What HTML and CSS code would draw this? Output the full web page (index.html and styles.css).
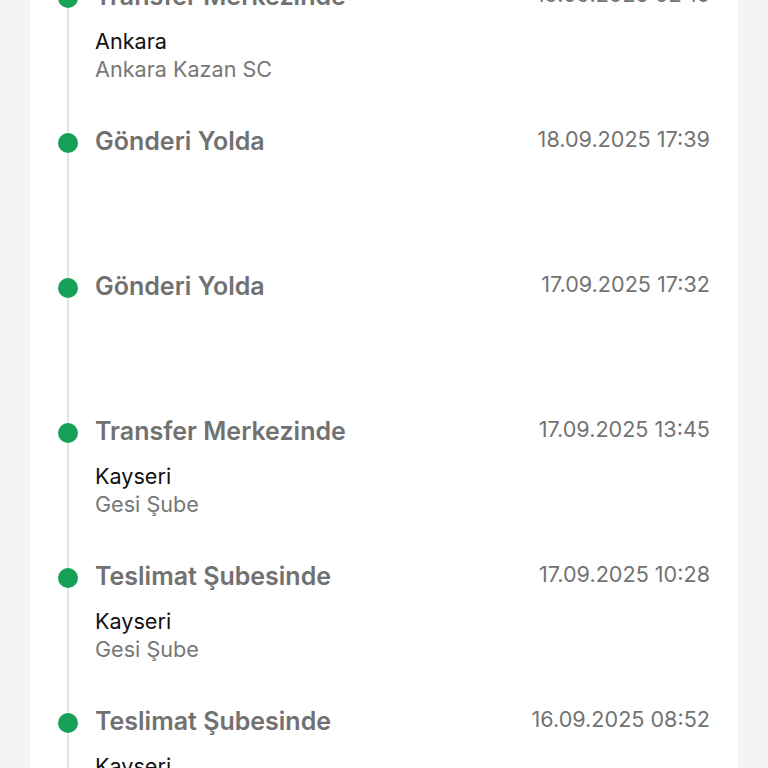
FILE: index.html
```html
<!DOCTYPE html>
<html lang="tr">
<head>
    <meta charset="UTF-8">
    <meta name="viewport" content="width=device-width, initial-scale=1.0">
    <title>Gönderi Takibi</title>
    <link rel="stylesheet" href="styles.css">
</head>
<body>
    <div class="page">
        <div class="card">
            <div class="timeline">
                <div class="step">
                    <span class="dot"></span>
                    <div class="info">
                        <div class="title">Transfer Merkezinde</div>
                        <div class="place">Ankara</div>
                        <div class="branch">Ankara Kazan SC</div>
                    </div>
                    <div class="date">19.09.2025 02:16</div>
                </div>
                <div class="step">
                    <span class="dot"></span>
                    <div class="info">
                        <div class="title">Gönderi Yolda</div>
                    </div>
                    <div class="date">18.09.2025 17:39</div>
                </div>
                <div class="step">
                    <span class="dot"></span>
                    <div class="info">
                        <div class="title">Gönderi Yolda</div>
                    </div>
                    <div class="date">17.09.2025 17:32</div>
                </div>
                <div class="step">
                    <span class="dot"></span>
                    <div class="info">
                        <div class="title">Transfer Merkezinde</div>
                        <div class="place">Kayseri</div>
                        <div class="branch">Gesi Şube</div>
                    </div>
                    <div class="date">17.09.2025 13:45</div>
                </div>
                <div class="step">
                    <span class="dot"></span>
                    <div class="info">
                        <div class="title">Teslimat Şubesinde</div>
                        <div class="place">Kayseri</div>
                        <div class="branch">Gesi Şube</div>
                    </div>
                    <div class="date">17.09.2025 10:28</div>
                </div>
                <div class="step">
                    <span class="dot"></span>
                    <div class="info">
                        <div class="title">Teslimat Şubesinde</div>
                        <div class="place">Kayseri</div>
                        <div class="branch">Gesi Şube</div>
                    </div>
                    <div class="date">16.09.2025 08:52</div>
                </div>
            </div>
        </div>
    </div>
</body>
</html>
```

FILE: styles.css
```css
* { margin: 0; padding: 0; box-sizing: border-box; }
body {
    font-family: Inter, "Noto Sans", sans-serif;
    background: #f3f4f6;
    color: #111;
    overflow: hidden;
}
.page {
    padding: 0 30px;
    margin-top: -19px;
}
.card {
    background: white;
    padding: 0 28px 40px;
    min-height: 900px;
}
.timeline {
    position: relative;
}
.timeline::before {
    content: "";
    position: absolute;
    left: 9px;
    top: 0;
    bottom: 0;
    width: 2px;
    background: #e3e3e3;
}
.step {
    display: grid;
    grid-template-columns: 20px 1fr auto;
    column-gap: 17px;
    height: 145px;
}
.dot {
    position: relative;
    width: 20px;
    height: 20px;
    border-radius: 50%;
    background: #17a058;
    margin-top: 7px;
}
.title {
    font-size: 25px;
    font-weight: 600;
    line-height: 30px;
    color: #717171;
    margin-bottom: 16px;
}
.place {
    font-size: 21.6px;
    line-height: 28px;
    color: #111;
}
.branch {
    font-size: 21.6px;
    line-height: 28px;
    color: #777;
}
.date {
    font-size: 21.6px;
    line-height: 26px;
    color: #737373;
}
```
